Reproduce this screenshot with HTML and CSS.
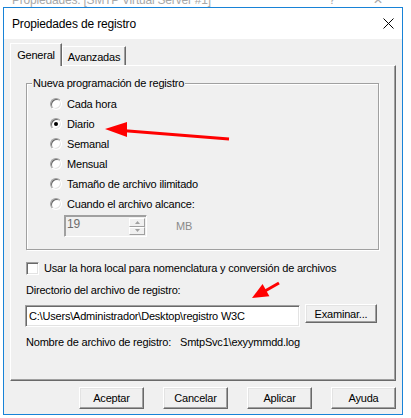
FILE: index.html
```html
<!DOCTYPE html>
<html lang="es">
<head>
<meta charset="utf-8">
<title>Propiedades de registro</title>
<link rel="stylesheet" href="styles.css">
</head>
<body>
<div class="screen">
  <div class="parent-bar">
    <span class="parent-title">Propiedades: [SMTP Virtual Server #1]</span>
    <span class="parent-help">?</span>
    <span class="parent-close">✕</span>
  </div>
  <div class="dialog">
    <div class="titlebar">
      <span class="title">Propiedades de registro</span>
      <svg class="close" width="11" height="11" viewBox="0 0 11 11"><path d="M0.5 0.5L10.5 10.5M10.5 0.5L0.5 10.5" stroke="#000" stroke-width="1"/></svg>
    </div>
    <div class="body">
      <div class="tabs">
        <div class="tab active">General</div>
        <div class="tab">Avanzadas</div>
      </div>
      <div class="panel">
        <fieldset class="group">
          <legend>Nueva programación de registro</legend>
          <div class="radios">
            <div class="radio"><span class="rb"></span>Cada hora</div>
            <div class="radio"><span class="rb checked"></span>Diario</div>
            <div class="radio"><span class="rb"></span>Semanal</div>
            <div class="radio"><span class="rb"></span>Mensual</div>
            <div class="radio"><span class="rb"></span>Tamaño de archivo ilimitado</div>
            <div class="radio"><span class="rb"></span>Cuando el archivo alcance:</div>
          </div>
          <div class="spin-row">
            <div class="spin">
              <span class="spin-val">19</span>
              <span class="spin-btns">
                <span class="sb"><svg width="5" height="3" viewBox="0 0 5 3"><path d="M2.5 0L5 3H0Z" fill="#a0a0a0"/></svg></span>
                <span class="sb"><svg width="5" height="3" viewBox="0 0 5 3"><path d="M0 0H5L2.5 3Z" fill="#a0a0a0"/></svg></span>
              </span>
            </div>
            <span class="unit">MB</span>
          </div>
        </fieldset>
        <div class="check-row"><span class="cb"></span>Usar la hora local para nomenclatura y conversión de archivos</div>
        <div class="label">Directorio del archivo de registro:</div>
        <div class="path-row">
          <div class="input">C:\Users\Administrador\Desktop\registro W3C</div>
          <div class="btn browse">Examinar...</div>
        </div>
        <div class="name-row"><span>Nombre de archivo de registro:</span><span class="name-val">SmtpSvc1\exyymmdd.log</span></div>
      </div>
      <div class="buttons">
        <div class="btn">Aceptar</div>
        <div class="btn">Cancelar</div>
        <div class="btn">Aplicar</div>
        <div class="btn">Ayuda</div>
      </div>
    </div>
  </div>
  <svg class="arrows" width="411" height="418" viewBox="0 0 411 418">
    <path d="M229 139L122 130.5" stroke="#ff0000" stroke-width="3" fill="none"/>
    <path d="M105 129L127 122L127 137Z" fill="#ff0000"/>
    <path d="M279 283L265 291" stroke="#ff0000" stroke-width="3" fill="none"/>
    <path d="M252 298L262.6 284.1L269.4 296.3Z" fill="#ff0000"/>
  </svg>
</div>
</body>
</html>
```

FILE: styles.css
```css
html, body {
  margin: 0;
  padding: 0;
  background: #ffffff;
}

.screen {
  position: relative;
  width: 411px;
  height: 418px;
  overflow: hidden;
  font-family: "Liberation Sans", Arial, sans-serif;
  font-size: 11px;
  letter-spacing: -0.2px;
  color: #000;
}

.parent-bar {
  height: 7px;
  overflow: hidden;
  display: flex;
  align-items: flex-end;
  padding-left: 12px;
  font-size: 12px;
  color: #a8a8a8;
  background: #ffffff;
}

.parent-bar span {
  line-height: 14px;
  white-space: nowrap;
}

.parent-help {
  margin-left: auto;
}

.parent-close {
  margin-left: 38px;
  margin-right: 28px;
}

.dialog {
  margin-left: 3px;
  width: 400px;
  height: 408px;
  box-sizing: border-box;
  border: 1px solid #1883d7;
  display: flex;
  flex-direction: column;
}

.titlebar {
  height: 31px;
  flex: none;
  display: flex;
  align-items: center;
  padding-left: 8px;
  padding-right: 8px;
  background: #ffffff;
}

.title {
  font-size: 12px;
  letter-spacing: -0.15px;
  margin-top: 1px;
}

.close {
  margin-left: auto;
  margin-top: 0px;
}

.body {
  flex: 1;
  background: #f0f0f0;
  padding: 4px 6px 0 6px;
  display: flex;
  flex-direction: column;
}

.tabs {
  display: flex;
  align-items: flex-end;
  height: 22px;
  position: relative;
  z-index: 1;
}

.tab {
  box-sizing: border-box;
  height: 19px;
  width: 64px;
  border-top: 1px solid #ffffff;
  border-left: 1px solid #ffffff;
  border-right: 1px solid #696969;
  box-shadow: inset -1px 0 #a0a0a0;
  display: flex;
  align-items: center;
  justify-content: center;
  padding-top: 1px;
}

.tab.active {
  width: 52px;
  height: 23px;
  margin-bottom: -1px;
  background: #f0f0f0;
  padding-bottom: 2px;
}

.panel {
  box-sizing: border-box;
  height: 316px;
  border-top: 1px solid #ffffff;
  border-left: 1px solid #ffffff;
  border-right: 1px solid #696969;
  border-bottom: 1px solid #696969;
  box-shadow: inset -1px -1px #a0a0a0;
  padding: 0 16px 0 15px;
  display: flex;
  flex-direction: column;
}

.group {
  margin: 11px 0 0 0;
  padding: 0 0 12px 5px;
  width: 353px;
  box-sizing: border-box;
  border: 1px solid #a0a0a0;
  box-shadow: inset 1px 1px #ffffff, 1px 1px #ffffff;
  min-width: 0;
}

.group legend {
  padding: 0 1px;
  line-height: 13px;
  background: #f0f0f0;
}

.radios {
  padding: 4px 0 0 18px;
  display: flex;
  flex-direction: column;
}

.radio {
  height: 20px;
  display: flex;
  align-items: center;
}

.rb {
  position: relative;
  width: 12px;
  height: 12px;
  box-sizing: border-box;
  border-radius: 50%;
  background: #ffffff;
  border: 1px solid;
  border-color: #a0a0a0 #ffffff #ffffff #a0a0a0;
  box-shadow: inset 1px 1px #696969, inset -1px -1px #e3e3e3;
  margin-right: 5px;
  flex: none;
}

.rb.checked::after {
  content: "";
  position: absolute;
  left: 3px;
  top: 3px;
  width: 4px;
  height: 4px;
  border-radius: 50%;
  background: #000;
}

.spin-row {
  display: flex;
  align-items: center;
  margin: 1px 0 0 32px;
  height: 22px;
}

.spin {
  box-sizing: border-box;
  width: 83px;
  height: 22px;
  border: 1px solid;
  border-color: #a0a0a0 #ffffff #ffffff #a0a0a0;
  box-shadow: inset 1px 1px #a0a0a0;
  background: #f0f0f0;
  display: flex;
  padding: 2px 1px 1px 2px;
}

.spin-val {
  flex: 1;
  color: #6d6d6d;
  line-height: 13px;
  font-size: 12px;
}

.spin-btns {
  width: 16px;
  display: flex;
  flex-direction: column;
}

.sb {
  flex: 1;
  box-sizing: border-box;
  border: 1px solid;
  border-color: #ffffff #a0a0a0 #a0a0a0 #ffffff;
  display: flex;
  align-items: center;
  justify-content: center;
}

.unit {
  margin-left: 29px;
  color: #8a8a8a;
}

.check-row {
  display: flex;
  align-items: center;
  height: 14px;
  margin-top: 11px;
}

.cb {
  width: 13px;
  height: 13px;
  box-sizing: border-box;
  background: #ffffff;
  border: 1px solid;
  border-color: #a0a0a0 #ffffff #ffffff #a0a0a0;
  box-shadow: inset 1px 1px #696969, inset -1px -1px #e3e3e3;
  margin-right: 5px;
  flex: none;
}

.label {
  margin-top: 9px;
  line-height: 13px;
}

.path-row {
  display: flex;
  align-items: flex-start;
  margin: 8px 0 0 -1px;
}

.input {
  box-sizing: border-box;
  width: 275px;
  height: 22px;
  background: #ffffff;
  border: 1px solid;
  border-color: #a0a0a0 #ffffff #ffffff #a0a0a0;
  box-shadow: inset 1px 1px #696969, inset -1px -1px #e3e3e3;
  padding: 3px 0 0 3px;
  line-height: 14px;
  white-space: nowrap;
}

.btn {
  box-sizing: border-box;
  width: 65px;
  height: 22px;
  background: #f0f0f0;
  border: 1px solid;
  border-color: #ffffff #696969 #696969 #ffffff;
  box-shadow: inset -1px -1px #a0a0a0, inset 1px 1px #e3e3e3;
  display: flex;
  align-items: center;
  justify-content: center;
}

.browse {
  width: 72px;
  height: 19px;
  margin-left: 5px;
  margin-top: -1px;
}

.name-row {
  margin-top: 9px;
  line-height: 13px;
  display: flex;
}

.name-val {
  margin-left: 9px;
}

.buttons {
  display: flex;
  justify-content: flex-end;
  gap: 19px;
  margin-top: 6px;
}

.arrows {
  position: absolute;
  left: 0;
  top: 0;
  pointer-events: none;
}
```
